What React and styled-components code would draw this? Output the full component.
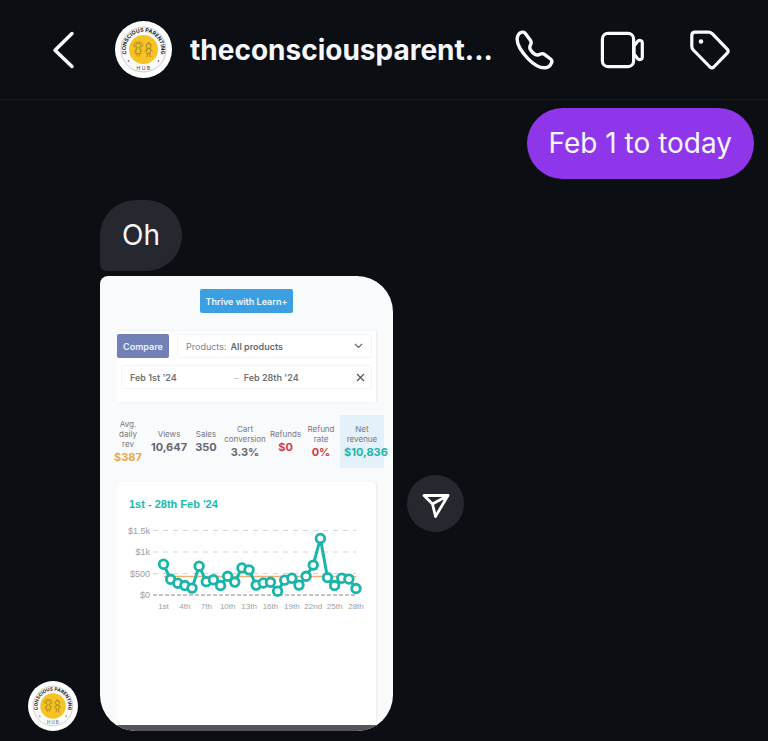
import React from "react";
import styled, { createGlobalStyle } from "styled-components";

const GlobalStyle = createGlobalStyle`
	* {
		box-sizing: border-box;
	}
	body {
		margin: 0;
		background-color: #0b0f14;
		font-family: Inter, "Liberation Sans", sans-serif;
	}
	button,
	input,
	select {
		font-family: inherit;
		border: none;
		margin: 0;
		padding: 0;
	}
	svg {
		display: block;
		flex: none;
	}
`;

const Page = styled.div`
	min-height: 100vh;
	color: #f5f7fa;
`;

const Header = styled.header`
	display: flex;
	align-items: center;
	height: 100px;
	padding: 0 38px 0 52px;
	border-bottom: 1px solid #171b20;
`;

const IconButton = styled.button`
	background: none;
	color: #f8fafc;
	cursor: pointer;
`;

const Profile = styled.div`
	display: flex;
	flex: 1;
	align-items: center;
	gap: 18px;
	min-width: 0;
	margin-left: 40px;
`;

const UserName = styled.h1`
	margin: 0;
	overflow: hidden;
	font-size: 28px;
	font-weight: 700;
	line-height: 40px;
	white-space: nowrap;
`;

const Actions = styled.div`
	display: flex;
	align-items: center;
	gap: 46px;
`;

const Thread = styled.main`
	display: flex;
	flex-direction: column;
	gap: 21px;
	padding: 8px 14px 10px 28px;
`;

const Bubble = styled.p`
	align-self: ${({ $own }) => ($own ? "flex-end" : "flex-start")};
	margin: 0;
	padding: 16px 22px 17px;
	border-radius: ${({ $own }) => ($own ? "36px" : "41px 41px 41px 8px")};
	background-color: ${({ $own }) => ($own ? "#9036ea" : "#25282e")};
	font-size: 28px;
	line-height: 38px;
`;

const Incoming = styled.div`
	display: flex;
	align-items: flex-end;
	gap: 22px;
`;

const Messages = styled.div`
	display: flex;
	flex-direction: column;
	gap: 5px;
`;

const Attachment = styled.div`
	display: flex;
	align-items: center;
	gap: 14px;
`;

const SendButton = styled.button`
	display: flex;
	align-items: center;
	justify-content: center;
	width: 57px;
	height: 57px;
	border-radius: 50%;
	background-color: #25282e;
	color: #fff;
	cursor: pointer;
`;

const Report = styled.section`
	display: flex;
	flex-direction: column;
	width: 293px;
	padding-top: 13px;
	overflow: hidden;
	border-radius: 8px 36px 36px 36px;
	background-color: #f9fafb;
	color: #75787c;
`;

const ReportFooter = styled.div`
	height: 6px;
	background-color: #555557;
`;

const ThriveButton = styled.button`
	align-self: center;
	height: 24px;
	padding: 0 6px;
	border-radius: 2px;
	background-color: #3b9fe2;
	color: #eef8ff;
	font-size: 9px;
	font-weight: 600;
`;

const Panel = styled.div`
	margin: 0 17px;
	background-color: #fff;
	box-shadow: 1px 0 2px #e9eaec;
`;

const Filters = styled(Panel)`
	display: flex;
	flex-direction: column;
	gap: 7px;
	margin-top: 18px;
	padding: 3px 4px 13px 0;
`;

const FilterRow = styled.div`
	display: flex;
	gap: 8px;
`;

const CompareButton = styled.button`
	width: 52px;
	height: 24px;
	border-radius: 2px;
	background-color: #7280b8;
	color: #eef1fb;
	font-size: 9px;
	font-weight: 600;
`;

const Field = styled.div`
	display: flex;
	flex: 1;
	align-items: center;
	height: 24px;
	padding: 0 8px;
	border: 1px solid #f3f4f5;
	border-radius: 2px;
	font-size: 9px;
	color: #808387;
`;

const DateField = styled(Field)`
	flex: none;
	margin-left: 4px;
	padding: 0 6px 0 8px;
`;

const ProductSelect = styled.select`
	flex: 1;
	min-width: 0;
	margin-left: 4px;
	appearance: none;
	background: none;
	color: #66696d;
	font-size: 9px;
	font-weight: 600;
`;

const DateInput = styled.input`
	flex: 1;
	width: 0;
	background: none;
	color: #6f7276;
	font-size: 9px;
	font-weight: 600;
`;

const Dash = styled.span`
	margin-right: 5px;
	color: #b4b6b8;
`;

const ClearButton = styled(IconButton)`
	padding-left: 8px;
`;

const Stats = styled.dl`
	display: grid;
	grid-template-columns: 38fr 44fr 30fr 48fr 33fr 38fr 44fr;
	margin: 13px 9px 14px;
`;

const Stat = styled.div`
	display: flex;
	flex-direction: column;
	justify-content: center;
	min-width: 0;
	height: 53px;
	padding: ${({ $active }) => ($active ? "2px 4px 0" : "2px 0 0")};
	background-color: ${({ $active }) => ($active ? "#e4f0fa" : "transparent")};
	text-align: center;
	dt {
		font-size: 8px;
		line-height: 10px;
		white-space: pre-line;
	}
	dd {
		margin: 0;
		color: ${({ $color }) => $color};
		font-size: 11px;
		font-weight: 700;
		line-height: 17px;
		white-space: nowrap;
	}
`;

const ChartPanel = styled(Panel)`
	height: 243px;
	border-radius: 4px 4px 0 0;
	padding: 15px 0 0 8px;
`;

const ChartTitle = styled.h2`
	margin: 0 0 8px 4px;
	color: #1cb8a8;
	font-family: "Liberation Sans", sans-serif;
	font-size: 11px;
	font-weight: 700;
	line-height: 15px;
`;

const ChartSvg = styled.svg`
	font-family: "Liberation Sans", sans-serif;
	font-size: 8px;
`;

const stats = [
	{ label: "Avg.\ndaily\nrev", value: "$387", color: "#eba745" },
	{ label: "Views", value: "10,647", color: "#66696e" },
	{ label: "Sales", value: "350", color: "#66696e" },
	{ label: "Cart\nconversion", value: "3.3%", color: "#66696e" },
	{ label: "Refunds", value: "$0", color: "#d23a46" },
	{ label: "Refund\nrate", value: "0%", color: "#d23a46" },
	{ label: "Net\nrevenue", value: "$10,836", color: "#22b5a6", active: true },
];

const revenue = [
	715, 365, 275, 220, 160, 670, 310, 355, 220, 435, 300, 630, 585, 230, 280, 295,
	90, 345, 390, 230, 435, 695, 1315, 405, 220, 390, 370, 150,
];
const days = ["1st", "4th", "7th", "10th", "13th", "16th", "19th", "22nd", "25th", "28th"];
const ticks = [
	{ label: "$1.5k", value: 1500 },
	{ label: "$1k", value: 1000 },
	{ label: "$500", value: 500 },
	{ label: "$0", value: 0 },
];

const xOf = (i) => 38.5 + i * 7.13;
const yOf = (value) => 75 - value * 0.043;

const RevenueChart = () => (
	<ChartSvg width="248" height="95" viewBox="0 0 248 95" role="img" aria-label="Daily revenue">
		{ticks.map(({ label, value }) => (
			<g key={label}>
				<text x="25" y={yOf(value) + 3} textAnchor="end" fontSize="9" fill="#9c9ea1">
					{label}
				</text>
				<path
					d={`M28 ${yOf(value)}H231`}
					stroke={value ? "#d3d5d7" : "#85878a"}
					strokeWidth="1.2"
					strokeDasharray={value ? "5 5" : "4 2"}
				/>
			</g>
		))}
		<path d="M39 56.5H231" stroke="#f0ae72" strokeWidth="1.6" />
		<polyline
			points={revenue.map((value, i) => `${xOf(i)},${yOf(value)}`).join(" ")}
			fill="none"
			stroke="#18b5a8"
			strokeWidth="3"
		/>
		{revenue.map((value, i) => (
			<circle
				key={i}
				cx={xOf(i)}
				cy={yOf(value)}
				r="4.3"
				fill="#fff"
				stroke="#18b5a8"
				strokeWidth="2.8"
			/>
		))}
		{days.map((day, i) => (
			<text key={day} x={xOf(i * 3)} y="89" textAnchor="middle" fill="#9c9ea1">
				{day}
			</text>
		))}
	</ChartSvg>
);

const Logo = ({ size, id }) => (
	<svg width={size} height={size} viewBox="0 0 57 57" role="img" aria-label="Conscious Parenting Hub">
		<circle cx="28.5" cy="28.5" r="28.5" fill="#fff" />
		<circle cx="28.5" cy="28.5" r="22.5" fill="#fafafa" stroke="#a9a9a9" strokeWidth="0.6" />
		<circle cx="28.5" cy="28.5" r="14.5" fill="#f6c324" />
		<path id={id} d="M14.1 38.6A17.6 17.6 0 1 1 42.9 38.6" fill="none" />
		<text fontSize="5.3" fontWeight="700" fill="#222" textAnchor="middle">
			<textPath href={`#${id}`} startOffset="50%">
				CONSCIOUS PARENTING
			</textPath>
		</text>
		<text x="29" y="48.5" fontSize="5" fill="#444" textAnchor="middle" letterSpacing="1.4">
			HUB
		</text>
		<circle cx="13.5" cy="40" r="0.8" fill="#444" />
		<circle cx="43.5" cy="40" r="0.8" fill="#444" />
		<g fill="none" stroke="#94792b" strokeWidth="0.7">
			<circle cx="23.2" cy="24.6" r="2.4" />
			<path d="M20.8 25.6c-2.2.6-2.6-1.4-1.4-2.6 0-2 2.4-2.4 3.8-1.6 1.6-.8 3.8-.2 3.9 1.6 1.2 1.2.7 3-1.5 2.6M21.6 27.4l-2.4 3.2M24.8 27.4l2.4 3.2M21.6 27.4l-1.2 5h5.6l-1.2-5M22 32.4v3M24.4 32.4v3" />
			<circle cx="33.6" cy="25" r="2.4" />
			<path d="M30.8 24.2l1.6-1.2 1.2-2 1.2 2 1.8 1.2M31.8 27.6h3.6v4.8h-3.6zM31.8 28l-2 2.6M35.4 28l2.2 2.6M32.4 32.4v3h-1.2M34.8 32.4v3h1.4" />
		</g>
	</svg>
);

const BackIcon = () => (
	<svg width="23" height="40" viewBox="0 0 23 40" fill="none" stroke="currentColor" strokeWidth="3.5" strokeLinecap="round" strokeLinejoin="round">
		<path d="M20 3.5L3 20.2 20 36.5" />
	</svg>
);

const PhoneIcon = () => (
	<svg width="40" height="40" viewBox="-1 0 40 40" fill="none" stroke="currentColor" strokeWidth="3.4" strokeLinejoin="round">
		<path d="M2.3 7.5C2.8 5 4.8 2.7 7.2 2.2c1.5-.3 2.5.3 3.400 1.500l4.900 6.800c.8 1.200.9 2.400.3 3.700-1.200 2.300-1.800 3-.4 5.500 1.200 2.200 2.600 3.500 4.800 4.700 2.500 1.300 3.200.7 5.500-.4 1.300-.6 2.500-.5 3.700.4l6.200 4.600c1.200.9 1.600 2.200 1 3.600-1 2.700-3.600 5-6.500 5.200-5.200.3-11.400-3.200-17.200-9.200C6.500 21.800 1.300 13.500 2.300 7.500Z" />
	</svg>
);

const VideoIcon = () => (
	<svg width="44" height="40" viewBox="0 0 44 40" fill="none" stroke="currentColor" strokeWidth="3.2" strokeLinejoin="round">
		<rect x="2.4" y="3.4" width="31.2" height="33.2" rx="5.5" />
		<path d="M34 16l3.500-4.500c1.300-1.600 4.800-1.600 4.800 1.500v14c0 3.100-3.500 3.100-4.800 1.500L34 24Z" />
	</svg>
);

const TagIcon = () => (
	<svg width="40" height="40" viewBox="0 0 40 40" fill="none" stroke="currentColor" strokeWidth="3.2" strokeLinejoin="round">
		<path d="M5.200 2.200h13.300c1.500 0 2.500.5 3.700 1.500l15 15.500c1.100 1.200 1.100 2.700 0 3.900L23.800 37c-1.300 1.200-2.500 1.200-3.800 0L3.300 20c-1-1-1.500-2-1.500-3.500V5.600C1.800 3.400 3 2.200 5.200 2.200Z" />
		<circle cx="11" cy="11.5" r="2.3" fill="currentColor" stroke="none" />
	</svg>
);

const SendIcon = () => (
	<svg width="30" height="30" viewBox="0 0 30 30" fill="none" stroke="currentColor" strokeWidth="2.800" strokeLinecap="round" strokeLinejoin="round">
		<path d="M3 6.500h24L14.500 27.500 11.500 15ZM3 6.500L11.500 15 27 6.500" />
	</svg>
);

const ReportCard = () => (
	<Report>
		<ThriveButton type="button">Thrive with Learn+</ThriveButton>
		<Filters>
			<FilterRow>
				<CompareButton type="button">Compare</CompareButton>
				<Field>
					<label htmlFor="products">Products:</label>
					<ProductSelect id="products">
						<option>All products</option>
					</ProductSelect>
					<svg width="9" height="6" viewBox="0 0 9 6" fill="none" stroke="#66696e" strokeWidth="1.2">
						<path d="M1 1l3.5 3.5L8 1" />
					</svg>
				</Field>
			</FilterRow>
			<DateField>
				<DateInput aria-label="Start date" defaultValue="Feb 1st '24" />
				<Dash>–</Dash>
				<DateInput aria-label="End date" defaultValue="Feb 28th '24" />
				<ClearButton type="button" aria-label="Clear dates">
					<svg width="9" height="9" viewBox="0 0 9 9" fill="none" stroke="#505358" strokeWidth="1.2">
						<path d="M1 1l7 7M8 1L1 8" />
					</svg>
				</ClearButton>
			</DateField>
		</Filters>
		<Stats>
			{stats.map(({ label, value, color, active }) => (
				<Stat key={label} $color={color} $active={active}>
					<dt>{label}</dt>
					<dd>{value}</dd>
				</Stat>
			))}
		</Stats>
		<ChartPanel>
			<ChartTitle>1st - 28th Feb '24</ChartTitle>
			<RevenueChart />
		</ChartPanel>
		<ReportFooter />
	</Report>
);

export default function App() {
	return (
		<Page>
			<GlobalStyle />
			<Header>
				<IconButton type="button" aria-label="Back">
					<BackIcon />
				</IconButton>
				<Profile>
					<Logo size={57} id="headerRing" />
					<UserName>theconsciousparent...</UserName>
				</Profile>
				<Actions>
					<IconButton type="button" aria-label="Call">
						<PhoneIcon />
					</IconButton>
					<IconButton type="button" aria-label="Video call">
						<VideoIcon />
					</IconButton>
					<IconButton type="button" aria-label="Label">
						<TagIcon />
					</IconButton>
				</Actions>
			</Header>
			<Thread>
				<Bubble $own>Feb 1 to today</Bubble>
				<Incoming>
					<Logo size={50} id="messageRing" />
					<Messages>
						<Bubble>Oh</Bubble>
						<Attachment>
							<ReportCard />
							<SendButton type="button" aria-label="Share">
								<SendIcon />
							</SendButton>
						</Attachment>
					</Messages>
				</Incoming>
			</Thread>
		</Page>
	);
}
